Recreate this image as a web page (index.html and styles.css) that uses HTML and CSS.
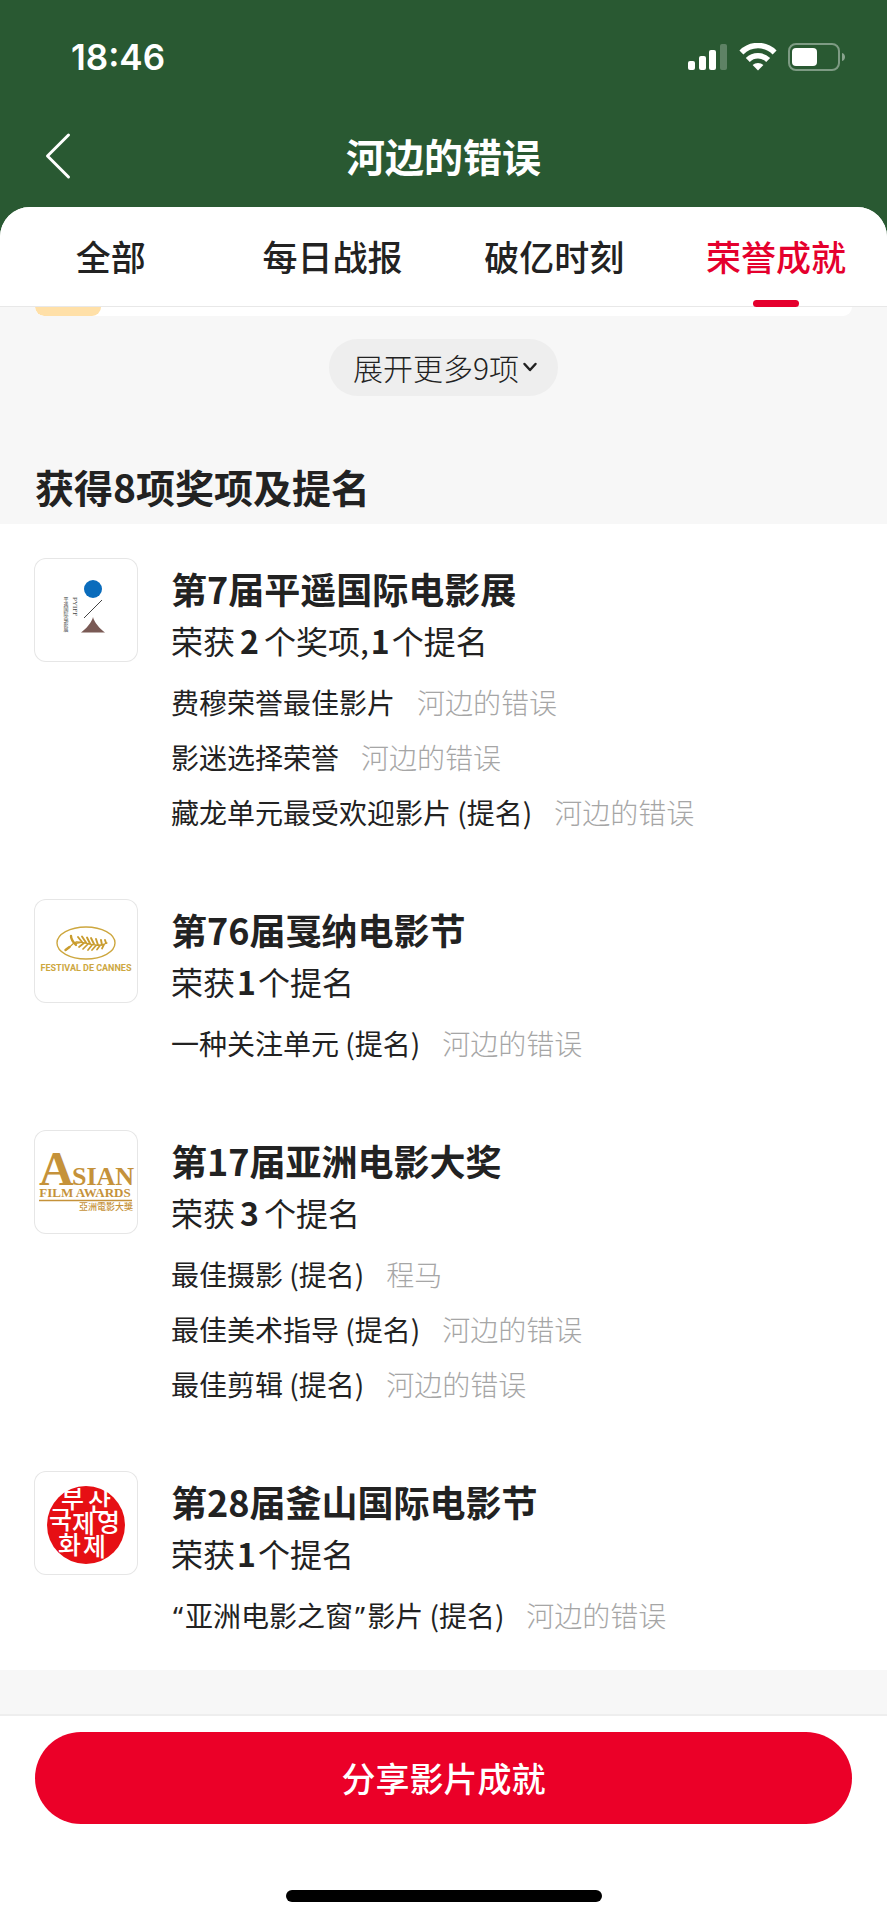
FILE: index.html
```html
<!DOCTYPE html>
<html lang="zh-CN">
<head>
<meta charset="utf-8">
<meta name="viewport" content="width=device-width, initial-scale=1">
<title>河边的错误</title>
<link rel="stylesheet" href="styles.css">
</head>
<body>
<div class="app">
  <header class="header">
    <div class="status">
      <span class="status-time">18:46</span>
      <div class="status-icons">
        <svg width="40" height="28" viewBox="0 0 40 28" fill="#fff" aria-hidden="true">
          <rect x="0" y="18" width="7" height="9" rx="2"/>
          <rect x="11" y="13" width="7" height="14" rx="2"/>
          <rect x="21" y="7" width="7" height="20" rx="2"/>
          <rect x="32" y="1" width="7" height="26" rx="2" opacity=".25"/>
        </svg>
        <svg width="38" height="28" viewBox="0 0 38 28" aria-hidden="true">
          <g fill="none" stroke="#fff" stroke-width="5.6">
            <path d="M2.4 9.400a23.6 23.6 0 0 1 33.2 0"/>
            <path d="M8.8 17a14.4 14.4 0 0 1 20.4 0"/>
          </g>
          <path d="M19 27.4l-5.4-5.4a8 8 0 0 1 10.8 0z" fill="#fff"/>
        </svg>
        <svg width="58" height="28" viewBox="0 0 58 28" aria-hidden="true">
          <rect x="1" y="1" width="50" height="26" rx="7" fill="none" stroke="#fff" stroke-width="2" opacity=".4"/>
          <rect x="4" y="5" width="25" height="18" rx="4" fill="#fff"/>
          <path d="M54 10c4 1 4 7 0 8z" fill="#fff" opacity=".45"/>
        </svg>
      </div>
    </div>
    <div class="nav">
      <button class="back" type="button" aria-label="返回">
        <svg width="26" height="48" viewBox="0 0 26 48" fill="none" stroke="#fff" stroke-width="3" stroke-linecap="round" stroke-linejoin="round" aria-hidden="true"><path d="M23.500 3L2.500 24l21 21"/></svg>
      </button>
      <h1 class="nav-title">河边的错误</h1>
    </div>
  </header>

  <main class="sheet">
    <nav class="tabs">
      <a class="tab" href="#all">全部</a>
      <a class="tab" href="#daily">每日战报</a>
      <a class="tab" href="#moments">破亿时刻</a>
      <a class="tab tab-active" href="#honors" aria-current="page">荣誉成就</a>
    </nav>

    <section class="summary">
      <div class="card-end"><span class="card-end-badge"></span></div>
      <button class="expand" type="button">展开更多9项<svg width="16" height="16" viewBox="0 0 16 16" fill="none" stroke="#222" stroke-width="2.500" stroke-linecap="round" stroke-linejoin="round" aria-hidden="true"><path d="M2.500 5l5.500 6 5.500-6"/></svg></button>
      <h2 class="summary-title">获得8项奖项及提名</h2>
    </section>

    <section class="festivals" id="honors">
      <article class="festival">
        <svg class="logo" viewBox="0 0 104 104" aria-hidden="true">
          <circle cx="59" cy="31" r="9" fill="#0a6cbc"/>
          <path d="M50 60L68 42" stroke="#444" stroke-width="1"/>
          <path d="M59 59c1 5 7 12 12 15.500H47c5-3.500 11-10.500 12-15.500z" fill="#7a5a55"/>
          <text class="logo-pyiff" transform="translate(39 39) rotate(90)">PYIFF</text>
          <text class="logo-pingyao" x="32" y="39">平遥国际电影展</text>
        </svg>
        <div class="detail">
          <h3 class="festival-name">第7届平遥国际电影展</h3>
          <p class="tally">荣获<b class="count">2</b>个奖项,<b class="count count-slim">1</b>个提名</p>
          <ul class="awards">
            <li class="award"><span>费穆荣誉最佳影片</span><span class="winner">河边的错误</span></li>
            <li class="award"><span>影迷选择荣誉</span><span class="winner">河边的错误</span></li>
            <li class="award"><span>藏龙单元最受欢迎影片 (提名)</span><span class="winner">河边的错误</span></li>
          </ul>
        </div>
      </article>

      <article class="festival">
        <svg class="logo" viewBox="0 0 104 104" aria-hidden="true">
          <ellipse cx="52" cy="44" rx="29" ry="16" fill="none" stroke="#cda73f" stroke-width="1.400"/>
          <g fill="none" stroke="#c99c2e" stroke-linecap="round">
            <path d="M32 51c3-1 5-6 10-8 9-1 20 7 31 1" stroke-width="1.300"/>
            <path d="M31.500 51l4-3M37 37c0 3 2 6 5 9" stroke-width="2.400"/>
            <path d="M48 43l-4-5M52 43.500l-4-6M56 44.500l-3-6M60 45l-3-6M64 46l-2-6M68 46l-1-5M72 44l-1-3" stroke-width="1.900"/>
            <path d="M46 43.500l-5 1M50 44l-5 4M54 45l-5 5M58 46l-4 5M62 46.500l-4 4.500M66 46.500l-3 4M70 45.500l-2 4" stroke-width="1.700"/>
          </g>
          <text class="logo-cannes" x="52" y="72">FESTIVAL DE CANNES</text>
        </svg>
        <div class="detail">
          <h3 class="festival-name">第76届戛纳电影节</h3>
          <p class="tally">荣获<b class="count count-slim">1</b>个提名</p>
          <ul class="awards">
            <li class="award"><span>一种关注单元 (提名)</span><span class="winner">河边的错误</span></li>
          </ul>
        </div>
      </article>

      <article class="festival">
        <svg class="logo" viewBox="0 0 104 104" aria-hidden="true">
          <g class="logo-asian">
            <text class="asian-initial" x="5" y="55">A</text>
            <text class="asian-rest" x="38" y="55">SIAN</text>
            <text class="asian-sub" x="51" y="67">FILM AWARDS</text>
          </g>
          <path d="M5 70.500h93" stroke="#c5923a" stroke-width="1.500"/>
          <text class="asian-cjk" x="45" y="80">亞洲電影大獎</text>
        </svg>
        <div class="detail">
          <h3 class="festival-name">第17届亚洲电影大奖</h3>
          <p class="tally">荣获<b class="count">3</b>个提名</p>
          <ul class="awards">
            <li class="award"><span>最佳摄影 (提名)</span><span class="winner">程马</span></li>
            <li class="award"><span>最佳美术指导 (提名)</span><span class="winner">河边的错误</span></li>
            <li class="award"><span>最佳剪辑 (提名)</span><span class="winner">河边的错误</span></li>
          </ul>
        </div>
      </article>

      <article class="festival">
        <svg class="logo" viewBox="0 0 104 104" aria-hidden="true">
          <circle cx="52" cy="54" r="39" fill="#e60f14"/>
          <g class="logo-busan">
            <text x="27" y="37">부</text><text x="54" y="40">산</text>
            <text x="15" y="58">국</text><text x="38" y="62">제</text><text x="63" y="61">영</text>
            <text x="24" y="83">화</text><text x="49" y="85">제</text>
          </g>
        </svg>
        <div class="detail">
          <h3 class="festival-name">第28届釜山国际电影节</h3>
          <p class="tally">荣获<b class="count count-slim">1</b>个提名</p>
          <ul class="awards">
            <li class="award"><span><span class="quote">“</span>亚洲电影之窗<span class="quote">”</span>影片 (提名)</span><span class="winner">河边的错误</span></li>
          </ul>
        </div>
      </article>
    </section>
  </main>

  <footer class="footer">
    <button class="share" type="button">分享影片成就</button>
    <div class="home-bar"></div>
  </footer>
</div>
</body>
</html>
```
FILE: styles.css
```css
* {
  box-sizing: border-box;
}

body {
  margin: 0;
  background: #295932;
  color: #222;
  font-family: "Noto Sans CJK SC", "Noto Sans", sans-serif;
}

h1, h2, h3, p, ul {
  margin: 0;
  padding: 0;
}

ul {
  list-style: none;
}

button {
  border: 0;
  font-family: inherit;
  cursor: pointer;
}

svg {
  display: block;
}

.app {
  display: flex;
  flex-direction: column;
  min-height: 100vh;
}

.header {
  padding-bottom: 9px;
  color: #fff;
}

.status {
  display: flex;
  align-items: center;
  justify-content: space-between;
  height: 114px;
  padding: 0 41px 0 71px;
}

.status-time {
  font: 600 35px/40px Inter, sans-serif;
}

.status-icons {
  display: flex;
  gap: 11px;
}

.nav {
  display: grid;
  grid-template-columns: 80px 1fr 80px;
  align-items: center;
  height: 84px;
}

.back {
  display: flex;
  padding: 0 0 0 45px;
  background: none;
}

.nav-title {
  padding-bottom: 2px;
  font-size: 39px;
  font-weight: 700;
  line-height: 60px;
  text-align: center;
}

.sheet {
  display: flex;
  flex: 1;
  flex-direction: column;
  overflow: hidden;
  border-radius: 30px 30px 0 0;
  background: #f7f7f7;
}

.tabs {
  display: grid;
  grid-template-columns: repeat(4, 1fr);
  border-bottom: 1px solid #e8e8e8;
  background: #fff;
}

.tab {
  position: relative;
  padding: 23px 0 25px;
  color: #222;
  font-size: 35px;
  font-weight: 500;
  line-height: 51px;
  text-align: center;
  text-decoration: none;
}

.tab-active {
  color: #e5002d;
}

.tab-active::after {
  position: absolute;
  bottom: -1px;
  left: 50%;
  width: 46px;
  height: 7px;
  margin-left: -23px;
  border-radius: 4px;
  background: #e5002d;
  content: "";
}

.summary {
  display: flex;
  flex-direction: column;
  padding: 0 35px;
}

.card-end {
  height: 9px;
  overflow: hidden;
  border-radius: 0 0 9px 9px;
  background: #fff;
}

.card-end-badge {
  display: block;
  width: 66px;
  height: 9px;
  border-radius: 0 0 14px 14px;
  background: #ffe0a8;
}

.expand {
  display: flex;
  align-items: center;
  align-self: center;
  gap: 3px;
  margin: 23px 0 60px;
  padding: 0 20px 1px 24px;
  border-radius: 29px;
  background: #eee;
  color: #222;
  font-size: 30px;
  font-weight: 300;
  line-height: 56px;
}

.summary-title {
  padding-bottom: 8px;
  font-size: 39px;
  font-weight: 700;
  line-height: 60px;
}

.festivals {
  display: flex;
  flex-direction: column;
  gap: 59px;
  padding: 34px 34px 26px;
  background: #fff;
}

.festival {
  display: flex;
  align-items: flex-start;
  gap: 33px;
}

.logo {
  flex: none;
  width: 104px;
  height: 104px;
  border-radius: 12px;
  box-shadow: inset 0 0 0 1px #e6e6e6;
}

.detail {
  padding-top: 4px;
}

.festival-name {
  font-size: 36px;
  font-weight: 700;
  line-height: 52px;
}

.tally {
  font-size: 32px;
  line-height: 52px;
}

.count {
  padding: 0 5px;
  font-weight: 700;
}

.count-slim {
  padding: 0 2px;
}

.awards {
  padding-top: 9px;
}

.award {
  display: flex;
  gap: 22px;
  font-size: 28px;
  line-height: 55px;
}

.winner {
  color: #a6a6a6;
  font-weight: 300;
}

.quote {
  padding: 0 2px;
  font-family: "Noto Sans", sans-serif;
}

.logo-pyiff {
  fill: #444;
  font: 7px "Liberation Serif", serif;
}

.logo-pingyao {
  fill: #444;
  font-size: 5px;
  writing-mode: vertical-rl;
}

.logo-cannes {
  fill: #cda73f;
  font: 700 9px Roboto, sans-serif;
  text-anchor: middle;
}

.logo-asian {
  fill: #c5923a;
  font-family: "Liberation Serif", serif;
  font-weight: 700;
}

.asian-initial {
  font-size: 48px;
}

.asian-rest {
  font-size: 26px;
}

.asian-sub {
  font-size: 13px;
  text-anchor: middle;
}

.asian-cjk {
  fill: #c5923a;
  font-family: "Noto Sans CJK TC", sans-serif;
  font-size: 9px;
  font-weight: 500;
}

.logo-busan {
  fill: #fff;
  font-family: "Noto Sans CJK KR", sans-serif;
  font-size: 25px;
  font-weight: 500;
}

.footer {
  display: flex;
  flex-direction: column;
  align-items: center;
  gap: 66px;
  padding: 16px 35px 18px;
  border-top: 2px solid #eee;
  background: #fff;
}

.share {
  width: 100%;
  border-radius: 46px;
  background: #eb0028;
  color: #fff;
  font-size: 34px;
  font-weight: 500;
  line-height: 90px;
}

.home-bar {
  width: 316px;
  height: 12px;
  border-radius: 6px;
  background: #000;
}
```
